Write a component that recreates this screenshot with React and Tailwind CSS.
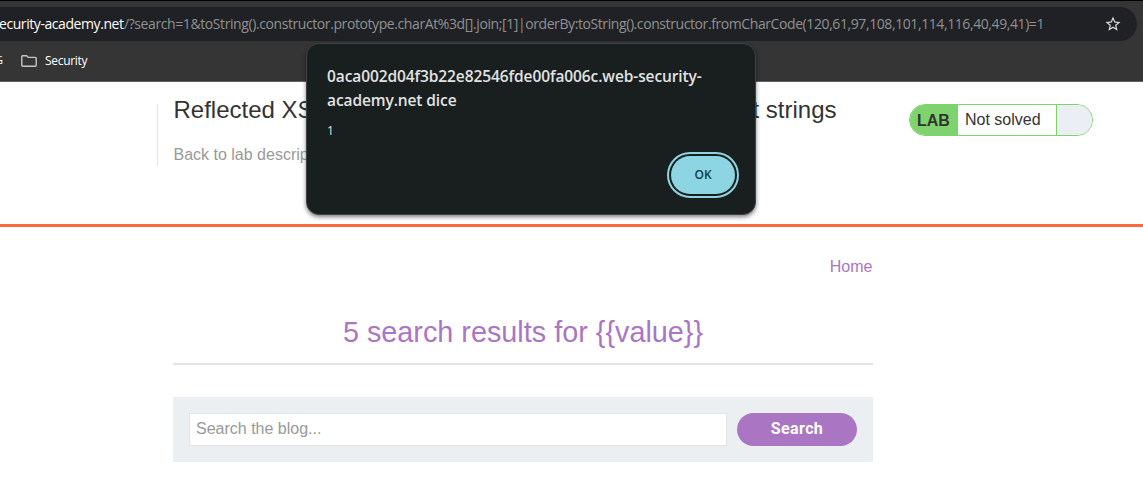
function Star() {
  return (
    <svg className="size-[18px]" viewBox="0 0 24 24" fill="#dcdcdc">
      <path d="M22 9.24l-7.19-.62L12 2 9.19 8.63 2 9.24l5.46 4.73L5.82 21 12 17.27 18.18 21l-1.63-7.03L22 9.24zM12 15.4l-3.76 2.27 1-4.28-3.32-2.88 4.38-.38L12 6.1l1.71 4.04 4.38.38-3.32 2.88 1 4.28L12 15.4z" />
    </svg>
  );
}

function Folder() {
  return (
    <svg className="h-3 w-4 shrink-0" viewBox="0 0 16 12" fill="none" stroke="#c7c7c7" strokeWidth="1.4">
      <path d="M.8 10V1.6Q.8.8 1.6.8H5.6L7.2 2.4H14.2Q15.2 2.4 15.2 3.4V10.2Q15.2 11.2 14.2 11.2H1.8Q.8 11.2.8 10Z" />
    </svg>
  );
}

function BrowserBar() {
  return (
    <div className="h-[82px] border-t border-b border-t-black border-b-[#616161] bg-[#353535] pt-1.5 font-['Open_Sans','Noto_Sans',sans-serif]">
      <div className="flex h-[34px] w-[1137px] items-center justify-between rounded-r-full bg-[#202124] pr-[15px]">
        <div className="flex whitespace-nowrap text-[14px] leading-5">
          <span className="-ml-px w-[125px] tracking-[-0.43px] text-white">ecurity-academy.net</span>
          <span className="tracking-[-0.41px] text-[#8f9194]">
            /?search=1&amp;toString().constructor.prototype.charAt%3d[].join;[1]|orderBy:toString().constructor.fromCharCode(120,61,97,108,101,114,116,40,49,41)=1
          </span>
        </div>
        <Star />
      </div>
      <div className="flex h-[39px] items-center overflow-hidden text-[12px] text-white">
        <span className="-ml-[5px] w-[26px] text-[11px]">G</span>
        <Folder />
        <span className="ml-2 tracking-[-0.3px]">Security</span>
      </div>
    </div>
  );
}

function LabHeader() {
  return (
    <header className="flex h-[145px] items-start border-b-[3px] border-[#f76b3c] pt-[22px] pl-[157px]">
      <div className="h-[62px] w-[751px] border-l border-[#e4e4e4] pl-[15.5px]">
        <h2 className="-mt-2 whitespace-nowrap text-[24px] leading-7 text-[#333332]">
          Reflected XSS with AngularJS sandbox escape without strings
        </h2>
        <p className="mt-[21px] text-[16px] leading-5 text-[#999]">Back to lab description</p>
      </div>
      <div className="ml-[1px] flex h-8 w-[184px] overflow-hidden rounded-full border border-[#7fd36f] text-[16px] leading-[30px] text-[#333332]">
        <b className="w-12 bg-[#7fd36f] pt-px pl-[7px]">LAB</b>
        <span className="w-[99px] border-r border-[#7fd36f] pl-[7px] whitespace-nowrap">Not solved</span>
        <span className="flex-1 bg-[#ebeef2]" />
      </div>
    </header>
  );
}

function Blog() {
  return (
    <main className="ml-[173px] w-[700px] pt-[30px]">
      <nav className="pr-[0.5px] text-right text-[16px] leading-5 text-[#aa76c3]">Home</nav>
      <h1 className="mt-[39px] h-[49px] border-b-2 border-[#e4e4e4] text-center text-[28.8px] leading-8 text-[#aa76c3]">
        5 search results for {"{{value}}"}
      </h1>
      <form className="mt-8 flex h-[65px] gap-2.5 bg-[#ebeff2] p-4">
        <input
          className="h-[33px] w-[538px] border border-[#e4e4e4] bg-white px-1.5 pb-0.5 text-[16px] placeholder:text-[#999]"
          placeholder="Search the blog..."
        />
        <button type="button" className="h-[33px] w-[120px] rounded-full bg-[#aa76c3] pb-0.5 font-['Roboto',sans-serif] text-[16px] font-bold tracking-[0.4px] text-white">
          Search
        </button>
      </form>
    </main>
  );
}

function AlertDialog() {
  return (
    <div role="dialog" className="absolute top-[43px] left-[306px] flex h-[172px] w-[450px] flex-col rounded-[13px] border border-[#3d4446] bg-[#191e1e] pt-5 pr-5 pl-5 font-['Open_Sans','Noto_Sans',sans-serif] text-[#e1e3e3] shadow-[0_2px_4px_rgba(0,0,0,0.5)]">
      <h3 className="whitespace-nowrap text-[15.5px] leading-6 font-semibold tracking-[-0.1px]">
        0aca002d04f3b22e82546fde00fa006c.web-security-
        <br />
        academy.net dice
      </h3>
      <p className="mt-[9px] text-[12px] leading-5">1</p>
      <button className="mt-[15px] h-[38px] w-16 self-end rounded-full bg-[#8ed5e3] text-[12px] font-semibold text-[#0e3d47] outline-2 outline-offset-2 outline-[#8ed5e3]">
        OK
      </button>
    </div>
  );
}

export default function App() {
  return (
    <div className="relative h-[481px] w-[1143px] overflow-hidden bg-white font-['Liberation_Sans',Arial,sans-serif]">
      <BrowserBar />
      <LabHeader />
      <Blog />
      <AlertDialog />
    </div>
  );
}
